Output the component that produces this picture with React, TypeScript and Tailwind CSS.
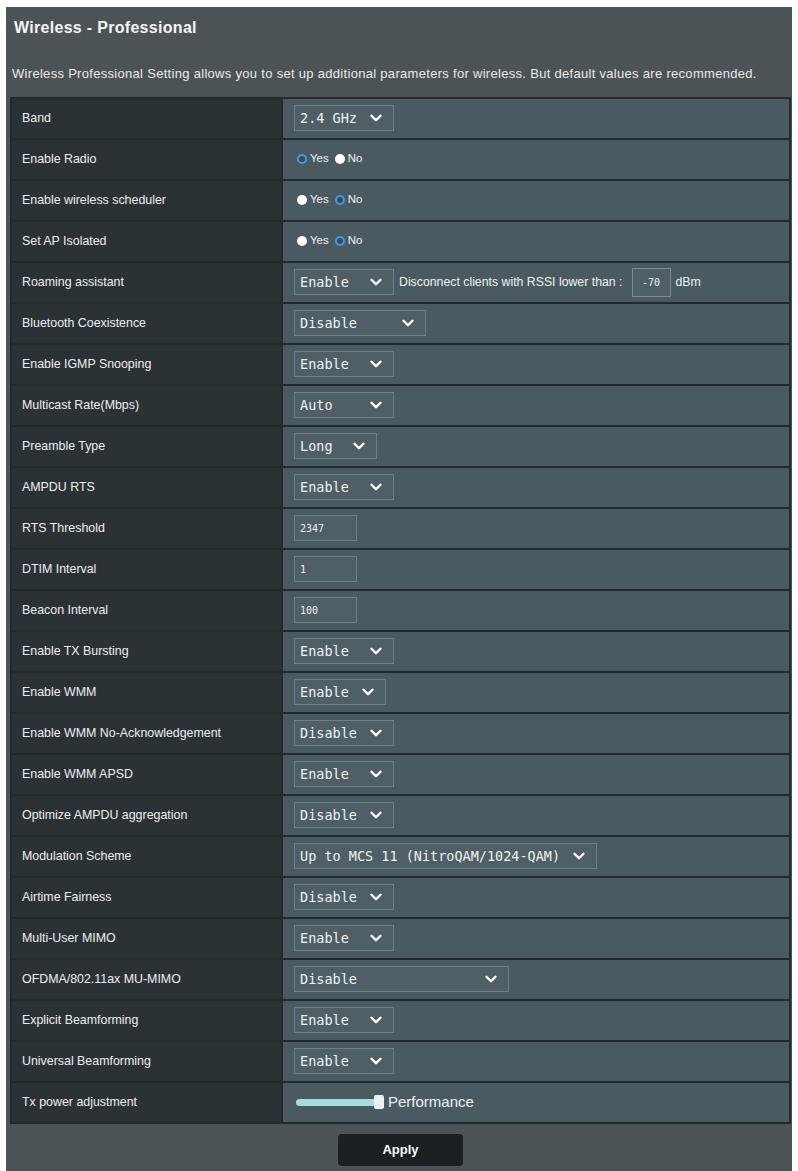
import { ChevronDown } from 'lucide-react';

type Row =
  | { label: string; kind: 'select'; value: string; width: string }
  | { label: string; kind: 'radio'; yes: boolean }
  | { label: string; kind: 'input'; value: string }
  | { label: string; kind: 'roaming' }
  | { label: string; kind: 'slider' };

const rows: Row[] = [
  { label: 'Band', kind: 'select', value: '2.4 GHz', width: 'w-[100px]' },
  { label: 'Enable Radio', kind: 'radio', yes: true },
  { label: 'Enable wireless scheduler', kind: 'radio', yes: false },
  { label: 'Set AP Isolated', kind: 'radio', yes: false },
  { label: 'Roaming assistant', kind: 'roaming' },
  { label: 'Bluetooth Coexistence', kind: 'select', value: 'Disable', width: 'w-[132px]' },
  { label: 'Enable IGMP Snooping', kind: 'select', value: 'Enable', width: 'w-[100px]' },
  { label: 'Multicast Rate(Mbps)', kind: 'select', value: 'Auto', width: 'w-[100px]' },
  { label: 'Preamble Type', kind: 'select', value: 'Long', width: 'w-[83px]' },
  { label: 'AMPDU RTS', kind: 'select', value: 'Enable', width: 'w-[100px]' },
  { label: 'RTS Threshold', kind: 'input', value: '2347' },
  { label: 'DTIM Interval', kind: 'input', value: '1' },
  { label: 'Beacon Interval', kind: 'input', value: '100' },
  { label: 'Enable TX Bursting', kind: 'select', value: 'Enable', width: 'w-[100px]' },
  { label: 'Enable WMM', kind: 'select', value: 'Enable', width: 'w-[92px]' },
  { label: 'Enable WMM No-Acknowledgement', kind: 'select', value: 'Disable', width: 'w-[100px]' },
  { label: 'Enable WMM APSD', kind: 'select', value: 'Enable', width: 'w-[100px]' },
  { label: 'Optimize AMPDU aggregation', kind: 'select', value: 'Disable', width: 'w-[100px]' },
  { label: 'Modulation Scheme', kind: 'select', value: 'Up to MCS 11 (NitroQAM/1024-QAM)', width: 'w-[303px]' },
  { label: 'Airtime Fairness', kind: 'select', value: 'Disable', width: 'w-[100px]' },
  { label: 'Multi-User MIMO', kind: 'select', value: 'Enable', width: 'w-[100px]' },
  { label: 'OFDMA/802.11ax MU-MIMO', kind: 'select', value: 'Disable', width: 'w-[215px]' },
  { label: 'Explicit Beamforming', kind: 'select', value: 'Enable', width: 'w-[100px]' },
  { label: 'Universal Beamforming', kind: 'select', value: 'Enable', width: 'w-[100px]' },
  { label: 'Tx power adjustment', kind: 'slider' },
];

function Select({ value, width }: { value: string; width: string }) {
  return (
    <div
      className={`${width} h-[26px] flex items-center justify-between pl-[5px] pr-[8px] border border-[#6f7f84] bg-[#4f5f65] text-[#eef2f2] text-[13.5px] [font-family:'DejaVu_Sans_Mono',monospace] whitespace-nowrap`}
    >
      <span>{value}</span>
      <ChevronDown size={18} strokeWidth={3.2} className="text-white shrink-0" />
    </div>
  );
}

function Radio({ checked, text }: { checked: boolean; text: string }) {
  return (
    <span className="flex items-center gap-[3px]">
      {checked ? (
        <span className="w-[10px] h-[10px] rounded-full border-2 border-[#3e9bf0] bg-[#3b4a50]" />
      ) : (
        <span className="w-[10px] h-[10px] rounded-full bg-white" />
      )}
      <span>{text}</span>
    </span>
  );
}

function TextBox({ value, width = 'w-[63px]' }: { value: string; width?: string }) {
  return (
    <div
      className={`${width} h-[26px] flex items-center px-[5px] border border-[#6f7f84] bg-[#4f5f65] text-[#eef2f2] text-[10px] [font-family:'DejaVu_Sans_Mono',monospace]`}
    >
      {value}
    </div>
  );
}

function Value({ row }: { row: Row }) {
  switch (row.kind) {
    case 'select':
      return <Select value={row.value} width={row.width} />;
    case 'radio':
      return (
        <div className="flex items-center gap-[6px] pl-[3px] text-[11.5px] text-[#eef2f2]">
          <Radio checked={row.yes} text="Yes" />
          <Radio checked={!row.yes} text="No" />
        </div>
      );
    case 'input':
      return <TextBox value={row.value} />;
    case 'roaming':
      return (
        <div className="flex items-center text-[12.3px] text-[#eef2f2]">
          <Select value="Enable" width="w-[100px]" />
          <span className="ml-[5px]">Disconnect clients with RSSI lower than :</span>
          <div className="ml-[9px] w-[39px] h-[29px] flex items-center justify-center border border-[#7d8c90] bg-[#4f5f65] text-[10px] [font-family:'DejaVu_Sans_Mono',monospace]">
            -70
          </div>
          <span className="ml-[5px]">dBm</span>
        </div>
      );
    case 'slider':
      return (
        <div className="flex items-center pl-[2px] text-[15px] text-[#eef2f2]">
          <div className="w-[80px] h-[7px] rounded-l-full bg-[#a9dcdc]" />
          <div className="w-[10px] h-[14px] -ml-[2px] rounded-[2px] bg-[#e8f0f0]" />
          <span className="ml-[4px]">Performance</span>
        </div>
      );
  }
}

export default function App() {
  return (
    <div className="min-h-screen bg-white pt-[7px] px-[6px] [font-family:'Liberation_Sans',Arial,sans-serif]">
      <div className="bg-[#4c5356] pl-[4px] pr-[1px] pb-[6px]">
        <h1 className="pl-[4px] pt-[9px] text-[16px] font-bold tracking-[0.3px] text-[#f4f4f4]">Wireless - Professional</h1>
        <p className="pl-[2px] mt-[24px] text-[13px] text-[#e8eaea] tracking-[0.3px]">
          Wireless Professional Setting allows you to set up additional parameters for wireless. But default values are recommended.
        </p>

        <div className="mt-[13px] border-l-2 border-r-2 border-t-2 border-[#232a2d]">
          {rows.map((row) => (
            <div key={row.label} className="flex h-[41px] border-b-2 border-[#232a2d]">
              <div className="w-[271px] shrink-0 flex items-center pl-[10px] bg-[#2b3236] text-[12.4px] text-[#eceeee] border-r-2 border-[#232a2d]">
                {row.label}
              </div>
              <div className="flex-1 flex items-center pl-[11px] bg-[#4a5a60]">
                <Value row={row} />
              </div>
            </div>
          ))}
        </div>

        <div className="flex justify-center pt-[10px]">
          <button className="w-[125px] h-[32px] rounded-[4px] bg-[#1b2023] text-white text-[13px] font-bold">
            Apply
          </button>
        </div>
      </div>
    </div>
  );
}
